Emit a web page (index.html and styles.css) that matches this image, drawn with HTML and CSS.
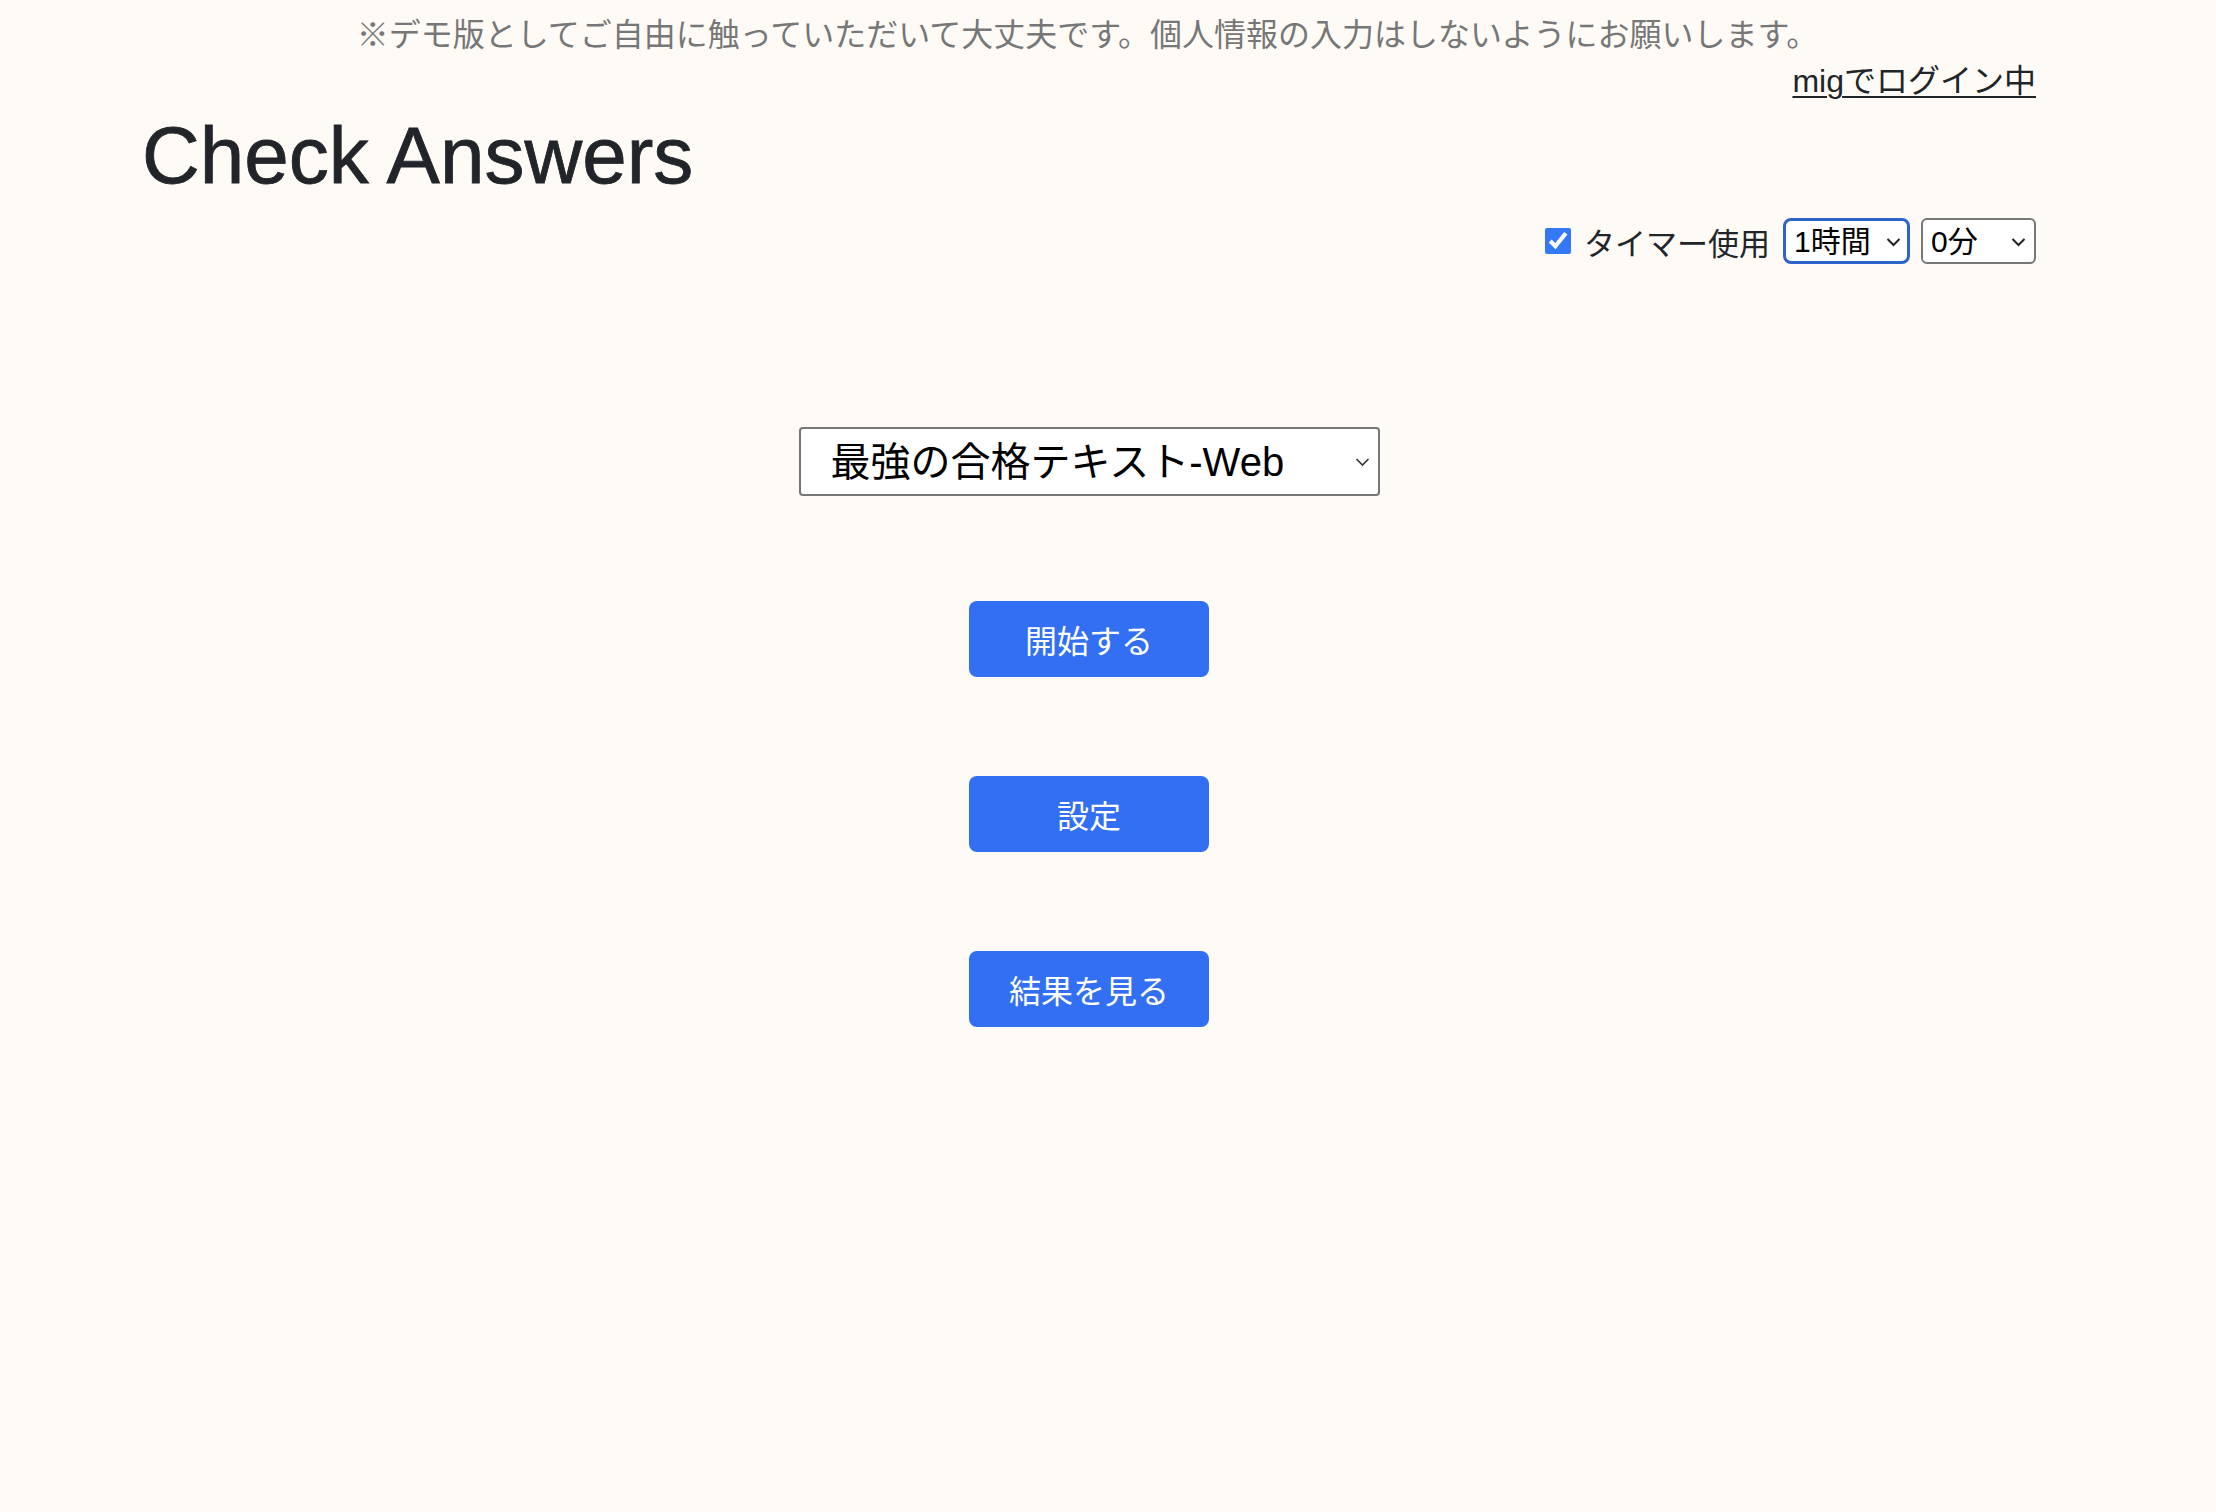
FILE: index.html
```html
<!DOCTYPE html>
<html lang="ja">
<head>
<meta charset="utf-8">
<title>Check Answers</title>
<link rel="stylesheet" href="styles.css">
</head>
<body>
<div class="page">
  <div class="notice">※デモ版としてご自由に触っていただいて大丈夫です。個人情報の入力はしないようにお願いします。</div>
  <div class="login-row"><a class="login" href="#">migでログイン中</a></div>
  <h1 class="title">Check Answers</h1>
  <div class="timer-row">
    <input class="timer-check" type="checkbox" checked>
    <span class="timer-label">タイマー使用</span>
    <span class="sel-wrap">
      <select class="sel sel-hour"><option>1時間</option></select>
      <svg class="chev" width="15" height="10" viewBox="0 0 15 10"><path d="M1.5 2 L7.5 8 L13.5 2" fill="none" stroke="#222" stroke-width="2"/></svg>
    </span>
    <span class="sel-wrap">
      <select class="sel sel-min"><option>0分</option></select>
      <svg class="chev" width="15" height="10" viewBox="0 0 15 10"><path d="M1.5 2 L7.5 8 L13.5 2" fill="none" stroke="#222" stroke-width="2"/></svg>
    </span>
  </div>
  <div class="main">
    <span class="sel-wrap">
      <select class="book"><option>最強の合格テキスト-Web</option></select>
      <svg class="chev chev-book" width="15" height="10" viewBox="0 0 15 10"><path d="M1.5 2 L7.5 8 L13.5 2" fill="none" stroke="#333" stroke-width="1.6"/></svg>
    </span>
    <div class="buttons">
      <button class="btn">開始する</button>
      <button class="btn">設定</button>
      <button class="btn">結果を見る</button>
    </div>
  </div>
</div>
</body>
</html>
```
FILE: styles.css
```css
html, body {
  margin: 0;
  padding: 0;
  background: #fefbf6;
}
body {
  font-family: "Liberation Sans", "Noto Sans CJK JP", sans-serif;
  color: #212529;
  min-height: 1512px;
}
.page {
  width: 1897px;
  margin-left: 139px;
}
.notice {
  padding-top: 11px;
  height: 46px;
  line-height: 48px;
  font-size: 32px;
  color: #777777;
  text-align: center;
}
.login-row {
  display: flex;
  justify-content: flex-end;
  height: 48px;
  line-height: 48px;
}
.login {
  font-size: 32px;
  color: #212529;
  text-decoration: underline;
  text-underline-offset: 4px;
  text-decoration-thickness: 2px;
}
.title {
  margin: 3px 0 0 0;
  padding-left: 3px;
  font-size: 80px;
  font-weight: 500;
  line-height: 96px;
  color: #212529;
  -webkit-text-stroke: 0.8px #212529;
}
.timer-row {
  margin-top: 14px;
  height: 46px;
  display: flex;
  justify-content: flex-end;
  align-items: center;
}
.timer-check {
  width: 26px;
  height: 26px;
  margin: 0 13px 0 0;
  accent-color: #3478f6;
}
.timer-label {
  font-size: 31px;
  color: #212529;
  margin-right: 13px;
}
.sel-wrap {
  position: relative;
  display: inline-block;
}
.sel {
  appearance: none;
  -webkit-appearance: none;
  height: 46px;
  font-family: "Liberation Sans", "Noto Sans CJK JP", sans-serif;
  font-size: 30px;
  color: #000;
  background: #fff;
  padding: 0 0 0 8px;
  box-sizing: border-box;
  display: block;
}
.sel-hour {
  width: 127px;
  border: 3px solid #2e64c9;
  border-radius: 8px;
  margin-right: 11px;
}
.sel-min {
  width: 115px;
  border: 2px solid #777;
  border-radius: 6px;
}
.chev {
  position: absolute;
  top: 19px;
  pointer-events: none;
}
.sel-wrap .sel-hour + .chev {
  right: 20px;
}
.sel-wrap .sel-min + .chev {
  right: 10px;
}
.main {
  margin-top: 163px;
  display: flex;
  flex-direction: column;
  align-items: center;
  padding-left: 3px;
}
.book {
  appearance: none;
  -webkit-appearance: none;
  width: 581px;
  height: 69px;
  box-sizing: border-box;
  border: 2px solid #777;
  border-radius: 4px;
  background: #fff;
  font-family: "Liberation Sans", "Noto Sans CJK JP", sans-serif;
  font-size: 40px;
  color: #000;
  padding: 0 0 0 30px;
  display: block;
}
.chev-book {
  right: 10px;
  top: 30px;
}
.buttons {
  margin-top: 105px;
  display: flex;
  flex-direction: column;
  align-items: center;
  gap: 99px;
}
.btn {
  width: 240px;
  height: 76px;
  border: none;
  border-radius: 8px;
  background: #336ff2;
  color: #fff;
  font-family: "Liberation Sans", "Noto Sans CJK JP", sans-serif;
  font-size: 32px;
  padding: 0;
}
```
